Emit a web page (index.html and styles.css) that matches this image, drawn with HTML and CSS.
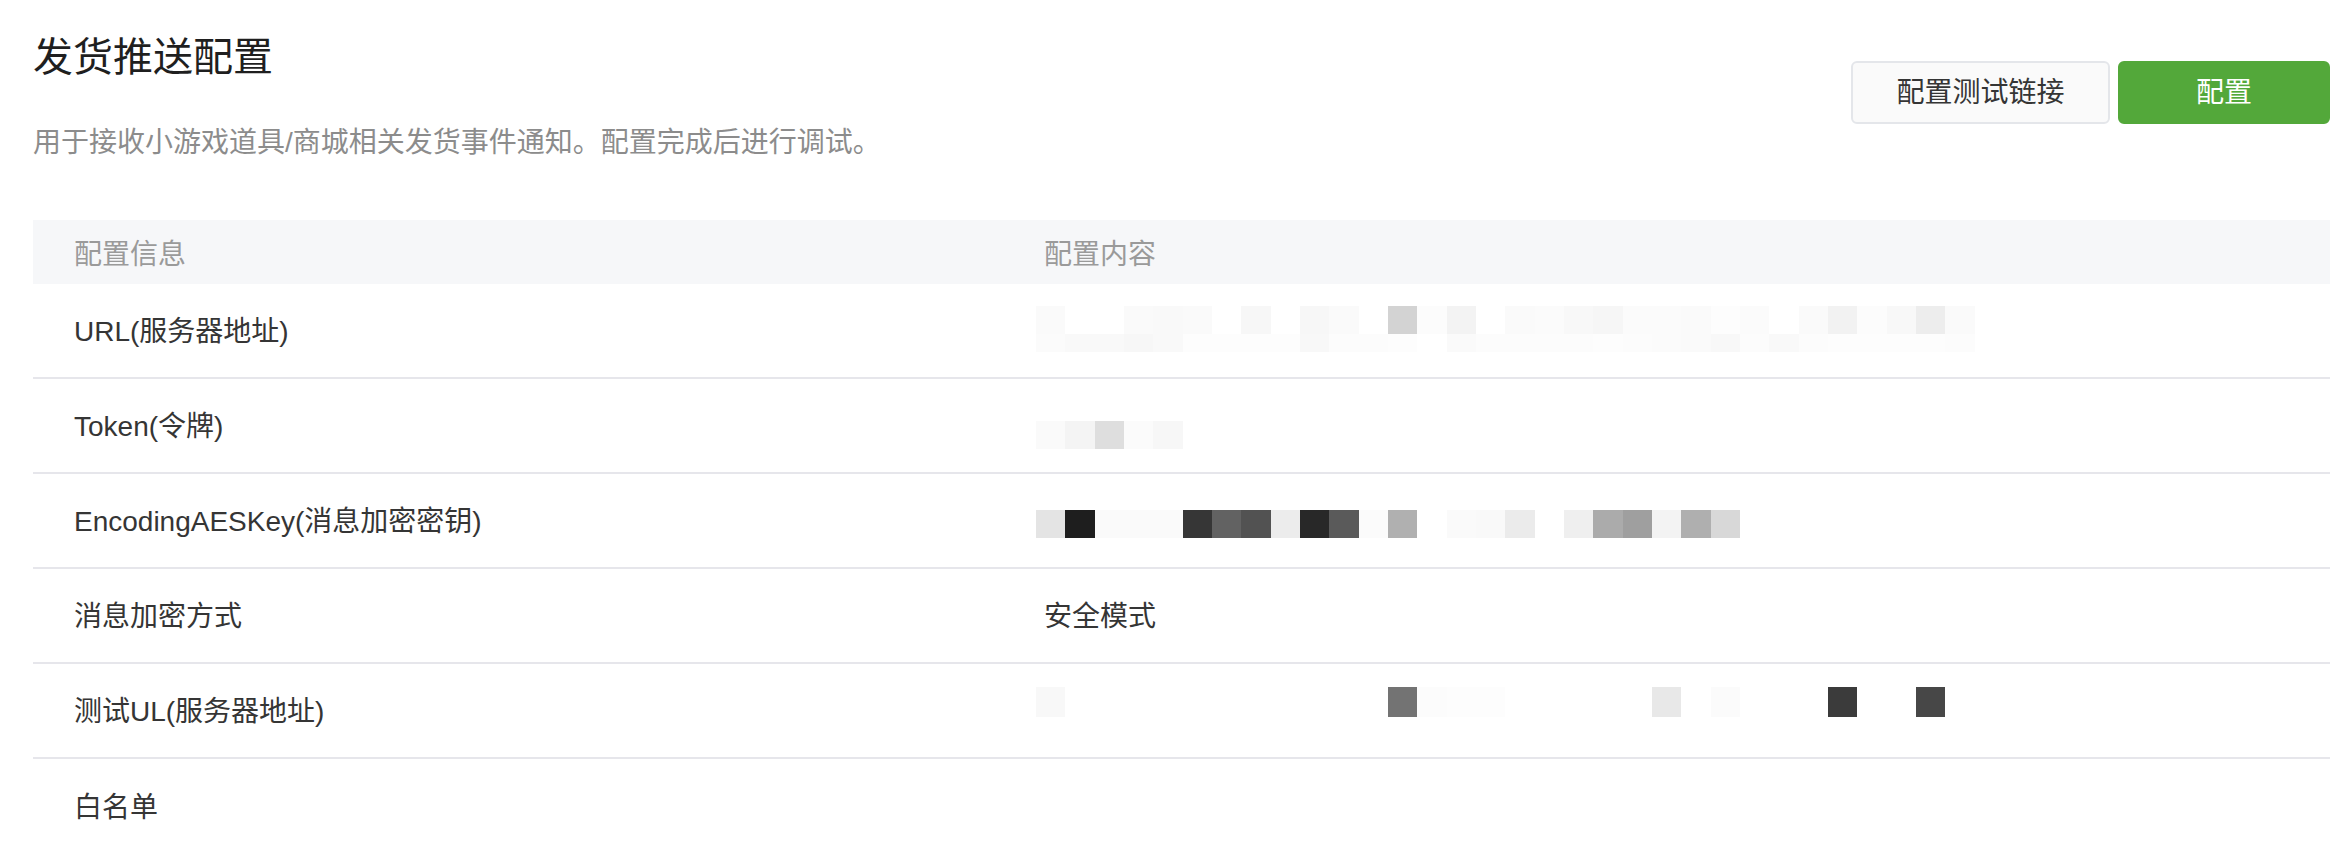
FILE: index.html
```html
<!DOCTYPE html>
<html lang="zh-CN">
<head>
<meta charset="utf-8">
<title>发货推送配置</title>
<link rel="stylesheet" href="styles.css">
</head>
<body>
<div class="page">
  <div class="head">
    <div class="intro">
      <h1 class="title">发货推送配置</h1>
      <p class="desc">用于接收小游戏道具/商城相关发货事件通知。配置完成后进行调试。</p>
    </div>
    <div class="actions">
      <button class="btn btn-default">配置测试链接</button>
      <button class="btn btn-primary">配置</button>
    </div>
  </div>

  <div class="table">
    <div class="row row-head">
      <div class="cell">配置信息</div>
      <div class="cell">配置内容</div>
    </div>

    <div class="row">
      <div class="cell">URL(服务器地址)</div>
      <div class="cell">
        <div class="mosaic mosaic-url">
          <div class="mrow">
            <span class="blk" style="background:#fafafa"></span><span class="blk"></span><span class="blk"></span><span class="blk" style="background:#fafafa"></span><span class="blk" style="background:#f9f9f9"></span><span class="blk" style="background:#fafafa"></span><span class="blk"></span><span class="blk" style="background:#f7f7f7"></span><span class="blk"></span><span class="blk" style="background:#f7f7f7"></span><span class="blk" style="background:#fafafa"></span><span class="blk"></span><span class="blk" style="background:#d3d3d3"></span><span class="blk" style="background:#fcfcfc"></span><span class="blk" style="background:#f3f3f3"></span><span class="blk"></span><span class="blk" style="background:#fafafa"></span><span class="blk" style="background:#fbfbfb"></span><span class="blk" style="background:#f8f8f8"></span><span class="blk" style="background:#f6f6f6"></span><span class="blk" style="background:#fbfbfb"></span><span class="blk" style="background:#fbfbfb"></span><span class="blk" style="background:#fafafa"></span><span class="blk" style="background:#fdfdfd"></span><span class="blk" style="background:#fbfbfb"></span><span class="blk"></span><span class="blk" style="background:#fafafa"></span><span class="blk" style="background:#f2f2f2"></span><span class="blk" style="background:#fcfcfc"></span><span class="blk" style="background:#f8f8f8"></span><span class="blk" style="background:#ededed"></span><span class="blk" style="background:#fafafa"></span>
          </div>
          <div class="mrow mrow-low">
            <span class="blk" style="background:#fbfbfb"></span><span class="blk" style="background:#f9f9f9"></span><span class="blk" style="background:#f9f9f9"></span><span class="blk" style="background:#f7f7f7"></span><span class="blk" style="background:#f9f9f9"></span><span class="blk" style="background:#fdfdfd"></span><span class="blk" style="background:#fdfdfd"></span><span class="blk" style="background:#fdfdfd"></span><span class="blk" style="background:#fdfdfd"></span><span class="blk" style="background:#f8f8f8"></span><span class="blk" style="background:#fcfcfc"></span><span class="blk" style="background:#fcfcfc"></span><span class="blk" style="background:#fdfdfd"></span><span class="blk"></span><span class="blk" style="background:#fafafa"></span><span class="blk" style="background:#fcfcfc"></span><span class="blk" style="background:#fcfcfc"></span><span class="blk" style="background:#fcfcfc"></span><span class="blk" style="background:#fcfcfc"></span><span class="blk" style="background:#fdfdfd"></span><span class="blk" style="background:#fcfcfc"></span><span class="blk" style="background:#fbfbfb"></span><span class="blk" style="background:#fafafa"></span><span class="blk" style="background:#f8f8f8"></span><span class="blk" style="background:#fcfcfc"></span><span class="blk" style="background:#f9f9f9"></span><span class="blk" style="background:#fcfcfc"></span><span class="blk" style="background:#fdfdfd"></span><span class="blk" style="background:#fdfdfd"></span><span class="blk" style="background:#fdfdfd"></span><span class="blk" style="background:#fdfdfd"></span><span class="blk" style="background:#fcfcfc"></span>
          </div>
        </div>
      </div>
    </div>

    <div class="row">
      <div class="cell">Token(令牌)</div>
      <div class="cell">
        <div class="mosaic mosaic-token">
          <div class="mrow">
            <span class="blk" style="background:#fafafa"></span><span class="blk" style="background:#f4f4f4"></span><span class="blk" style="background:#dedede"></span><span class="blk" style="background:#fbfbfb"></span><span class="blk" style="background:#f7f7f7"></span>
          </div>
        </div>
      </div>
    </div>

    <div class="row">
      <div class="cell">EncodingAESKey(消息加密密钥)</div>
      <div class="cell">
        <div class="mosaic mosaic-aes">
          <div class="mrow">
            <span class="blk" style="background:#e4e4e4"></span><span class="blk" style="background:#1e1e1e"></span><span class="blk" style="background:#fafafa"></span><span class="blk" style="background:#fafafa"></span><span class="blk" style="background:#fafafa"></span><span class="blk" style="background:#363636"></span><span class="blk" style="background:#626262"></span><span class="blk" style="background:#525252"></span><span class="blk" style="background:#ececec"></span><span class="blk" style="background:#282828"></span><span class="blk" style="background:#5a5a5a"></span><span class="blk" style="background:#fbfbfb"></span><span class="blk" style="background:#b0b0b0"></span><span class="blk"></span><span class="blk" style="background:#fafafa"></span><span class="blk" style="background:#f9f9f9"></span><span class="blk" style="background:#ebebeb"></span><span class="blk"></span><span class="blk" style="background:#efefef"></span><span class="blk" style="background:#ababab"></span><span class="blk" style="background:#9f9f9f"></span><span class="blk" style="background:#f3f3f3"></span><span class="blk" style="background:#afafaf"></span><span class="blk" style="background:#d8d8d8"></span>
          </div>
        </div>
      </div>
    </div>

    <div class="row">
      <div class="cell">消息加密方式</div>
      <div class="cell">安全模式</div>
    </div>

    <div class="row">
      <div class="cell">测试UL(服务器地址)</div>
      <div class="cell">
        <div class="mosaic mosaic-test">
          <div class="mrow mrow-tall">
            <span class="blk" style="background:#f8f8f8"></span><span class="blk"></span><span class="blk"></span><span class="blk"></span><span class="blk"></span><span class="blk"></span><span class="blk"></span><span class="blk"></span><span class="blk"></span><span class="blk"></span><span class="blk"></span><span class="blk"></span><span class="blk" style="background:#737373"></span><span class="blk" style="background:#fcfcfc"></span><span class="blk" style="background:#fdfdfd"></span><span class="blk" style="background:#fdfdfd"></span><span class="blk"></span><span class="blk"></span><span class="blk"></span><span class="blk"></span><span class="blk"></span><span class="blk" style="background:#e8e8e8"></span><span class="blk"></span><span class="blk" style="background:#fbfbfb"></span><span class="blk"></span><span class="blk"></span><span class="blk"></span><span class="blk" style="background:#3b3b3b"></span><span class="blk"></span><span class="blk"></span><span class="blk" style="background:#474747"></span>
          </div>
        </div>
      </div>
    </div>

    <div class="row row-last">
      <div class="cell">白名单</div>
      <div class="cell"></div>
    </div>
  </div>
</div>
</body>
</html>
```

FILE: styles.css
```css
* {
  box-sizing: border-box;
}

html, body {
  margin: 0;
  padding: 0;
  background: #ffffff;
}

body {
  font-family: "Liberation Sans", "Noto Sans CJK SC", sans-serif;
  color: #353535;
  overflow: hidden;
}

.page {
  padding: 0 16px 0 33px;
}

.head {
  display: flex;
  justify-content: space-between;
  align-items: flex-start;
}

.intro {
  padding-top: 29px;
}

.title {
  margin: 0;
  font-size: 40px;
  line-height: 56px;
  font-weight: 400;
  color: #1f1f1f;
}

.desc {
  margin: 38px 0 0;
  font-size: 28px;
  line-height: 40px;
  color: #8c8c8c;
}

.actions {
  display: flex;
  gap: 8px;
  margin-top: 61px;
}

.btn {
  height: 63px;
  border-radius: 6px;
  font-family: "Liberation Sans", "Noto Sans CJK SC", sans-serif;
  font-size: 28px;
  line-height: 1;
  padding: 0;
  cursor: pointer;
}

.btn-default {
  width: 259px;
  background: #fafafa;
  border: 2px solid #e4e6ea;
  color: #353535;
}

.btn-primary {
  width: 212px;
  background: #53a83a;
  border: 2px solid #53a83a;
  color: #ffffff;
}

.table {
  margin-top: 57px;
}

.row {
  display: grid;
  grid-template-columns: 970px 1fr;
  height: 95px;
  border-bottom: 2px solid #e6e6eb;
  font-size: 28px;
  color: #353535;
}

.row .cell {
  padding-bottom: 4px;
}

.row-head {
  height: 64px;
  background: #f6f7f9;
  border-bottom: none;
  color: #9a9a9a;
}

.row-head .cell {
  padding-bottom: 0;
}

.row-last {
  border-bottom: none;
}

.cell {
  display: flex;
  align-items: center;
  padding-left: 41px;
  white-space: nowrap;
}

.mosaic {
  display: flex;
  flex-direction: column;
  margin-left: -8px;
}

.mrow {
  display: flex;
  height: 28px;
}

.mrow-low {
  height: 18px;
}

.mrow-tall {
  height: 30px;
}

.blk {
  display: block;
  width: 29.33px;
  height: 100%;
  flex: none;
}

.mosaic-url {
  margin-top: 0;
}

.mosaic-token {
  margin-top: 22px;
}

.mosaic-aes {
  margin-top: 10px;
}

.mosaic-test {
  margin-bottom: 14px;
}
```
